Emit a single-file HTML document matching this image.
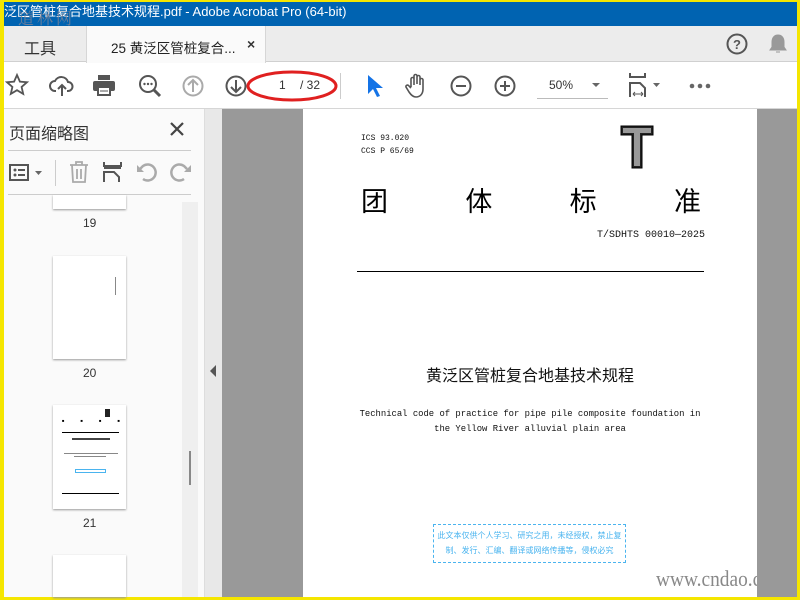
<!DOCTYPE html>
<html><head><meta charset="utf-8"><style>
*{margin:0;padding:0;box-sizing:border-box}
body{width:800px;height:600px;overflow:hidden;background:#f5e600;position:relative;font-family:"Liberation Sans","Noto Sans CJK SC",sans-serif}
.a{position:absolute}
.mono{font-family:"Liberation Mono","Noto Sans CJK SC",monospace}
svg{position:absolute;overflow:visible}
</style></head><body>
<div class="a" style="left:4px;top:2px;width:793px;height:595px;background:#fff"></div>
<!-- title bar -->
<div class="a" style="left:4px;top:2px;width:793px;height:24px;background:#0063b1;color:#fff;font-size:13px;line-height:20px;padding-left:0">泛区管桩复合地基技术规程.pdf - Adobe Acrobat Pro (64-bit)</div>
<!-- tab bar -->
<div class="a" style="left:4px;top:26px;width:793px;height:36px;background:#ececec;border-bottom:1px solid #d0d0d0"></div>
<div class="a" style="left:24px;top:35px;font-size:16px;color:#333">工具</div>
<div class="a" style="left:86px;top:26px;width:180px;height:37px;background:#fafafa;border-left:1px solid #d6d6d6;border-right:1px solid #d6d6d6"></div>
<div class="a" style="left:111px;top:37px;font-size:13.5px;color:#222">25 黄泛区管桩复合...</div>
<div class="a" style="left:247px;top:36px;font-size:14px;color:#333;font-weight:bold">×</div>
<div class="a" style="left:18px;top:6px;font-size:16px;color:#7d8396;font-family:'Noto Serif CJK SC',serif;letter-spacing:3px;opacity:.85">道林网</div>
<svg style="left:726px;top:33px" width="22" height="22"><circle cx="11" cy="11" r="9.5" fill="none" stroke="#555" stroke-width="2"/><text x="11" y="16" font-size="13" text-anchor="middle" fill="#555" font-family="Liberation Sans" font-weight="bold">?</text></svg>
<svg style="left:768px;top:33px" width="20" height="22"><path d="M10 2c-4 0-6 3-6 7v5l-2 3h16l-2-3V9c0-4-2-7-6-7z M8 19h4" fill="#999" stroke="#999"/></svg>
<!-- toolbar -->
<div class="a" style="left:4px;top:108px;width:793px;height:1px;background:#d6d6d6"></div>
<svg style="left:5px;top:73px" width="24" height="24"><path d="M12 2l2.9 6.6 7.1.6-5.4 4.7 1.6 7-6.2-3.7-6.2 3.7 1.6-7L2 9.2l7.1-.6z" fill="none" stroke="#555" stroke-width="1.8"/></svg>
<svg style="left:49px;top:74px" width="26" height="24"><path d="M7 17H6a5 5 0 0 1 0-10 7 7 0 0 1 13 1 4.5 4.5 0 0 1 0 9h-1" fill="none" stroke="#555" stroke-width="2"/><path d="M13 22V11M9 15l4-4 4 4" fill="none" stroke="#555" stroke-width="2"/></svg>
<svg style="left:92px;top:74px" width="24" height="22"><rect x="6" y="1" width="12" height="5" fill="#555"/><rect x="1" y="7" width="22" height="10" rx="2" fill="#555"/><rect x="6" y="13" width="12" height="8" fill="#fff" stroke="#555" stroke-width="2"/><path d="M8 17h8" stroke="#555"/></svg>
<svg style="left:138px;top:74px" width="24" height="24"><circle cx="10" cy="10" r="8" fill="none" stroke="#555" stroke-width="2"/><path d="M16 16l6 6" stroke="#555" stroke-width="3"/><circle cx="6.5" cy="10" r="1.2" fill="#555"/><circle cx="10" cy="10" r="1.2" fill="#555"/><circle cx="13.5" cy="10" r="1.2" fill="#555"/></svg>
<svg style="left:182px;top:75px" width="22" height="22"><circle cx="11" cy="11" r="9.5" fill="none" stroke="#aaa" stroke-width="2"/><path d="M11 17V5M6 10l5-5 5 5" fill="none" stroke="#aaa" stroke-width="2"/></svg>
<svg style="left:225px;top:75px" width="22" height="22"><circle cx="11" cy="11" r="9.5" fill="none" stroke="#555" stroke-width="2"/><path d="M11 5v12M6 12l5 5 5-5" fill="none" stroke="#555" stroke-width="2"/></svg>
<div class="a" style="left:279px;top:78px;font-size:12px;color:#333">1</div>
<div class="a" style="left:300px;top:78px;font-size:12px;color:#333">/ 32</div>
<svg style="left:245px;top:69px" width="95" height="36"><ellipse cx="47" cy="17" rx="44" ry="14" fill="none" stroke="#e02020" stroke-width="3"/></svg>
<div class="a" style="left:340px;top:73px;width:1px;height:26px;background:#ccc"></div>
<svg style="left:366px;top:74px" width="16" height="24"><path d="M2 1v19l5-5 4 8 3-1-4-8h7z" fill="#1473e6"/></svg>
<svg style="left:405px;top:73px" width="24" height="26"><path d="M6 14V6a1.5 1.5 0 0 1 3 0v6M9 11V3a1.5 1.5 0 0 1 3 0v8M12 11V4a1.5 1.5 0 0 1 3 0v7M15 12V7a1.5 1.5 0 0 1 3 0v9c0 5-3 8-7 8-3 0-5-2-7-5l-3-5a1.5 1.5 0 0 1 2.5-1.5L6 15" fill="none" stroke="#555" stroke-width="1.6"/></svg>
<svg style="left:450px;top:75px" width="22" height="22"><circle cx="11" cy="11" r="9.5" fill="none" stroke="#555" stroke-width="2"/><path d="M6 11h10" stroke="#555" stroke-width="2"/></svg>
<svg style="left:494px;top:75px" width="22" height="22"><circle cx="11" cy="11" r="9.5" fill="none" stroke="#555" stroke-width="2"/><path d="M6 11h10M11 6v10" stroke="#555" stroke-width="2"/></svg>
<div class="a" style="left:549px;top:78px;font-size:12px;color:#333">50%</div>
<svg style="left:592px;top:83px" width="10" height="6"><path d="M0 0h8l-4 4z" fill="#666"/></svg>
<div class="a" style="left:537px;top:98px;width:71px;height:1px;background:#bbb"></div>
<svg style="left:629px;top:72px" width="36" height="28"><path d="M1 1v4h15V1" fill="none" stroke="#555" stroke-width="2"/><path d="M1 25V11h10l5 5v9" fill="none" stroke="#555" stroke-width="2"/><path d="M4 22h10M4 22l2-2M4 22l2 2M14 22l-2-2M14 22l-2 2" stroke="#555"/><path d="M24 11h7l-3.5 4z" fill="#666"/></svg>
<svg style="left:689px;top:83px" width="28" height="6"><circle cx="3" cy="3" r="2.3" fill="#666"/><circle cx="11" cy="3" r="2.3" fill="#666"/><circle cx="19" cy="3" r="2.3" fill="#666"/></svg>
<!-- left panel -->
<div class="a" style="left:4px;top:109px;width:200px;height:488px;background:#fafafa"></div>
<div class="a" style="left:9px;top:120px;font-size:16px;color:#333">页面缩略图</div>
<svg style="left:170px;top:122px" width="14" height="14"><path d="M1 1l12 12M13 1L1 13" stroke="#444" stroke-width="2.2"/></svg>
<div class="a" style="left:8px;top:150px;width:183px;height:1px;background:#ccc"></div>
<div class="a" style="left:8px;top:194px;width:183px;height:1px;background:#ccc"></div>
<svg style="left:9px;top:164px" width="36" height="18"><rect x="1" y="1" width="18" height="15" fill="none" stroke="#555" stroke-width="2"/><circle cx="6" cy="6" r="1.5" fill="#555"/><circle cx="6" cy="11" r="1.5" fill="#555"/><path d="M9 6h7M9 11h7" stroke="#555" stroke-width="2"/><path d="M26 7h7l-3.5 4z" fill="#666"/></svg>
<div class="a" style="left:55px;top:160px;width:1px;height:26px;background:#ccc"></div>
<svg style="left:69px;top:161px" width="20" height="22"><path d="M1 4h18M7 4V1h6v3M3 4l1 17h12l1-17M8 8v10M12 8v10" fill="none" stroke="#aaa" stroke-width="1.8"/></svg>
<svg style="left:103px;top:161px" width="20" height="22"><path d="M1 1v4h17V1M1 7h17" fill="none" stroke="#555" stroke-width="2"/><path d="M1 21V11h10l5 5v5" fill="none" stroke="#555" stroke-width="2"/></svg>
<svg style="left:136px;top:161px" width="22" height="22"><path d="M7 18a8 8 0 1 0 0-13L4 8" fill="none" stroke="#aaa" stroke-width="2.5"/><path d="M1 4v7h7z" fill="#aaa"/></svg>
<svg style="left:170px;top:161px" width="22" height="22"><path d="M14 18a8 8 0 1 1 0-13l3 3" fill="none" stroke="#aaa" stroke-width="2.5"/><path d="M21 4v7h-7z" fill="#aaa"/></svg>
<div class="a" style="left:182px;top:202px;width:16px;height:395px;background:#efefef"></div>
<div class="a" style="left:189px;top:451px;width:2px;height:34px;background:#888"></div>
<div class="a" style="left:53px;top:195px;width:73px;height:14px;background:#fff;box-shadow:0 1px 2px #999"></div>
<div class="a" style="left:83px;top:216px;font-size:12px;color:#333">19</div>
<div class="a" style="left:53px;top:256px;width:73px;height:103px;background:#fff;box-shadow:0 1px 2px #999"></div>
<div class="a" style="left:115px;top:277px;width:1px;height:18px;background:#888"></div>
<div class="a" style="left:83px;top:366px;font-size:12px;color:#333">20</div>
<div class="a" style="left:53px;top:405px;width:73px;height:104px;background:#fff;box-shadow:0 1px 2px #999"></div>
<div class="a" style="left:105px;top:409px;width:5px;height:8px;background:#222"></div>
<div class="a" style="left:62px;top:418px;width:58px;font-size:4px;display:flex;justify-content:space-between;color:#000"><span>■</span><span>■</span><span>■</span><span>■</span></div>
<div class="a" style="left:62px;top:432px;width:57px;height:1px;background:#000"></div>
<div class="a" style="left:72px;top:438px;width:38px;height:2px;background:#444"></div>
<div class="a" style="left:64px;top:453px;width:54px;height:1px;background:#888"></div>
<div class="a" style="left:74px;top:456px;width:32px;height:1px;background:#888"></div>
<div class="a" style="left:75px;top:469px;width:31px;height:4px;border:1px solid #4ab4ef"></div>
<div class="a" style="left:62px;top:493px;width:57px;height:1px;background:#000"></div>
<div class="a" style="left:83px;top:516px;font-size:12px;color:#333">21</div>
<div class="a" style="left:53px;top:555px;width:73px;height:42px;background:#fff;box-shadow:0 1px 2px #999"></div>
<!-- splitter -->
<div class="a" style="left:204px;top:109px;width:18px;height:488px;background:#e8e8e8;border-left:1px solid #ddd"></div>
<svg style="left:210px;top:365px" width="8" height="12"><path d="M6 0v12L0 6z" fill="#555"/></svg>
<!-- doc area -->
<div class="a" style="left:222px;top:109px;width:575px;height:488px;background:#999"></div>
<div class="a" style="left:303px;top:109px;width:454px;height:488px;background:#fff"></div>
<div class="a mono" style="left:361px;top:132px;font-size:8px;color:#111;line-height:13px">ICS 93.020<br>CCS P 65/69</div>
<svg style="left:620px;top:125px" width="34" height="44"><path d="M1 1h32v9H22v33h-10V10H1z" fill="#222" stroke="#000"/><path d="M3 3h28v5H20v33h-6V8H3z" fill="#999"/></svg>
<div class="a" style="left:361px;top:180px;width:340px;display:flex;justify-content:space-between;font-size:27px;color:#000;font-family:'Noto Sans CJK SC',sans-serif"><span>团</span><span>体</span><span>标</span><span>准</span></div>
<div class="a mono" style="left:597px;top:230px;font-size:10px;color:#111">T/SDHTS 00010—2025</div>
<div class="a" style="left:357px;top:271px;width:347px;height:1px;background:#000"></div>
<div class="a" style="left:303px;top:362px;width:454px;text-align:center;font-size:16px;color:#111;font-family:'Noto Sans CJK SC',sans-serif">黄泛区管桩复合地基技术规程</div>
<div class="a mono" style="left:303px;top:407px;width:454px;text-align:center;font-size:8.9px;color:#111;line-height:15px">Technical code of practice for pipe pile composite foundation in<br>the Yellow River alluvial plain area</div>
<div class="a" style="left:433px;top:524px;width:193px;height:39px;border:1px dashed #4ab4ef;color:#4ab4ef;font-size:8px;line-height:15px;text-align:center;padding-top:3px;font-family:'Noto Sans CJK SC',sans-serif">此文本仅供个人学习、研究之用，未经授权，禁止复<br>制、发行、汇编、翻译或网络传播等，侵权必究</div>
<div class="a" style="left:656px;top:566px;font-size:22px;color:#888;font-family:'Liberation Serif',serif;transform:scaleX(.88);transform-origin:left">www.cndao.c</div>
<div class="a" style="left:757px;top:109px;width:40px;height:488px;background:#999"></div>
</body></html>
